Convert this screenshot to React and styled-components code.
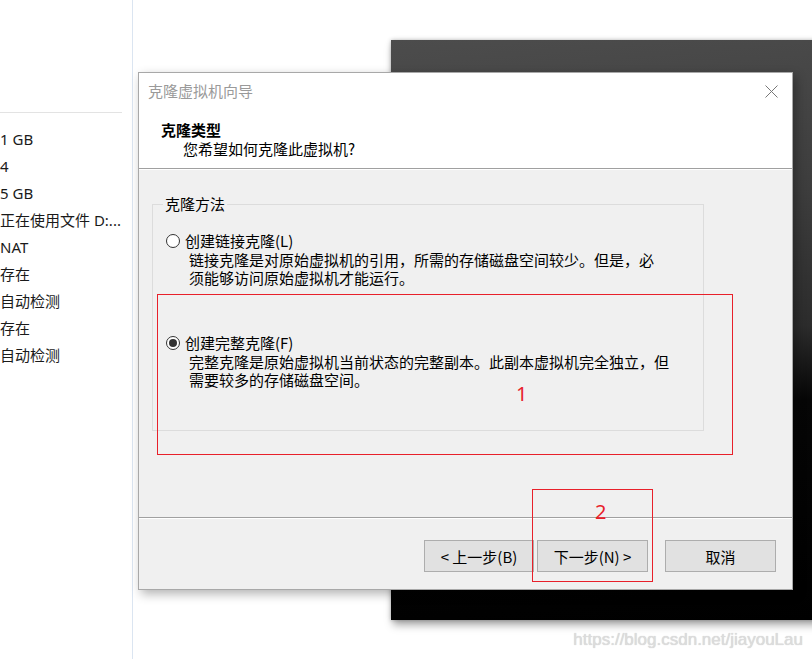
import React from 'react';
import styled, { createGlobalStyle } from 'styled-components';

const GlobalStyle = createGlobalStyle`
  html, body {
    margin: 0;
    padding: 0;
    background: #fff;
  }
  * {
    box-sizing: border-box;
  }
`;

const Desktop = styled.div`
  position: relative;
  width: 812px;
  height: 659px;
  overflow: hidden;
  background: #fff;
  display: flex;
  font-family: "Noto Sans", "Noto Sans CJK SC", sans-serif;
`;

const SidePanel = styled.div`
  width: 133px;
  height: 100%;
  border-right: 1px solid #dbe5f1;
  flex-shrink: 0;
`;

const SideTop = styled.div`
  width: 122px;
  height: 113px;
  border-bottom: 1px solid #e3e3e3;
`;

const SideList = styled.div`
  padding-top: 13px;
  display: flex;
  flex-direction: column;
`;

const SideRow = styled.div`
  height: 27px;
  line-height: 27px;
  font-size: 15px;
  color: #1a1a1a;
  white-space: nowrap;
`;

const DarkWindow = styled.div`
  position: absolute;
  left: 391px;
  top: 40px;
  width: 440px;
  height: 580px;
  background: linear-gradient(175deg, #4c4c4c 0%, #3d3d3d 30%, #2c2c2c 52%, #060606 64%, #000 100%);
  box-shadow: 0 0 4px rgba(0, 0, 0, 0.25), 2px 5px 8px rgba(0, 0, 0, 0.35);
`;

const Dialog = styled.div`
  position: absolute;
  left: 138px;
  top: 72px;
  width: 655px;
  height: 518px;
  border: 1px solid #a8a8a8;
  background: #f0f0f0;
  display: flex;
  flex-direction: column;
  font-family: "Noto Sans CJK SC", sans-serif;
  font-size: 15px;
  color: #000;
  box-shadow: 3px 4px 10px rgba(0, 0, 0, 0.3);
`;

const Header = styled.div`
  background: #fff;
  height: 96px;
  padding: 8px 14px 0 9px;
  border-bottom: 1px solid #a0a0a0;
  box-shadow: 0 1px 0 #fff;
`;

const TitleRow = styled.div`
  display: flex;
  justify-content: space-between;
  align-items: center;
  height: 20px;
  line-height: 20px;
  color: #9a9a9a;
`;

const CloseIcon = styled.svg`
  width: 13px;
  height: 13px;
  display: block;
`;

const HeaderTitle = styled.div`
  margin: 19px 0 0 13px;
  font-weight: bold;
  line-height: 19px;
`;

const HeaderSub = styled.div`
  margin-left: 35px;
  line-height: 19px;
`;

const Body = styled.div`
  flex: 1;
  padding: 25px 88px 0 13px;
`;

const GroupBox = styled.fieldset`
  margin: 0;
  padding: 17px 0 41px 13px;
  border: 1px solid #dcdcdc;
  min-width: 0;
`;

const Legend = styled.legend`
  margin-left: -3px;
  padding: 0 2px;
  line-height: 20px;
  color: #000;
`;

const Option = styled.div`
  & + & {
    margin-top: 46px;
  }
`;

const OptionLabel = styled.label`
  display: flex;
  align-items: center;
  gap: 5px;
  line-height: 20px;
`;

const Radio = styled.span`
  width: 14px;
  height: 14px;
  border-radius: 50%;
  border: 1px solid #333;
  background: #fff;
  display: flex;
  align-items: center;
  justify-content: center;

  &::after {
    content: '';
    width: 8px;
    height: 8px;
    border-radius: 50%;
    background: ${(p) => (p.$checked ? '#333' : 'transparent')};
  }
`;

const OptionDesc = styled.div`
  padding-left: 23px;
  line-height: 18px;
`;

const Footer = styled.div`
  height: 72px;
  border-top: 1px solid #a0a0a0;
  box-shadow: inset 0 1px 0 #fff;
  display: flex;
  justify-content: flex-end;
  align-items: flex-start;
  padding: 22px 16px 0 0;
`;

const Button = styled.button`
  width: ${(p) => p.$width || 111}px;
  height: 32px;
  margin-left: ${(p) => p.$gap || 0}px;
  background: #e1e1e1;
  border: 1px solid #adadad;
  font-family: "Noto Sans CJK SC", sans-serif;
  font-size: 15px;
  color: #000;
  padding: 0;
  cursor: pointer;
`;

const Mark = styled.div`
  position: absolute;
  left: ${(p) => p.$x}px;
  top: ${(p) => p.$y}px;
  width: ${(p) => p.$w}px;
  height: ${(p) => p.$h}px;
  border: 1px solid #e8202a;
  pointer-events: none;
`;

const MarkNumber = styled.span`
  position: absolute;
  left: ${(p) => p.$x}px;
  top: ${(p) => p.$y}px;
  font-family: "Noto Sans", sans-serif;
  font-size: 20px;
  line-height: 16px;
  color: #e8202a;
`;

const Watermark = styled.div`
  position: absolute;
  right: 9px;
  top: 630px;
  font-family: "Liberation Sans", Arial, sans-serif;
  font-size: 17px;
  line-height: 20px;
  color: #dcdcdc;
  text-shadow: 0 0 1px #c8c8c8;
`;

const sideRows = ['1 GB', '4', '5 GB', '正在使用文件 D:...', 'NAT', '存在', '自动检测', '存在', '自动检测'];

const options = [
  {
    label: '创建链接克隆(L)',
    lines: ['链接克隆是对原始虚拟机的引用，所需的存储磁盘空间较少。但是，必', '须能够访问原始虚拟机才能运行。'],
    checked: false,
  },
  {
    label: '创建完整克隆(F)',
    lines: ['完整克隆是原始虚拟机当前状态的完整副本。此副本虚拟机完全独立，但', '需要较多的存储磁盘空间。'],
    checked: true,
  },
];

export default function App() {
  return (
    <>
      <GlobalStyle />
      <Desktop>
        <SidePanel>
          <SideTop />
          <SideList>
            {sideRows.map((r, i) => (
              <SideRow key={i}>{r}</SideRow>
            ))}
          </SideList>
        </SidePanel>

        <DarkWindow />

        <Dialog>
          <Header>
            <TitleRow>
              <span>克隆虚拟机向导</span>
              <CloseIcon viewBox="0 0 13 13">
                <path d="M0.5 0.5 L12.5 12.5 M12.5 0.5 L0.5 12.5" stroke="#777" strokeWidth="1" fill="none" />
              </CloseIcon>
            </TitleRow>
            <HeaderTitle>克隆类型</HeaderTitle>
            <HeaderSub>您希望如何克隆此虚拟机?</HeaderSub>
          </Header>

          <Body>
            <GroupBox>
              <Legend>克隆方法</Legend>
              {options.map((o) => (
                <Option key={o.label}>
                  <OptionLabel>
                    <Radio $checked={o.checked} />
                    {o.label}
                  </OptionLabel>
                  {o.lines.map((l) => (
                    <OptionDesc key={l}>{l}</OptionDesc>
                  ))}
                </Option>
              ))}
            </GroupBox>
          </Body>

          <Footer>
            <Button $width={110}>&lt; 上一步(B)</Button>
            <Button $gap={3}>下一步(N) &gt;</Button>
            <Button $gap={17}>取消</Button>
          </Footer>
        </Dialog>

        <Mark $x={157} $y={294} $w={576} $h={161}>
          <MarkNumber $x={358} $y={91}>1</MarkNumber>
        </Mark>
        <Mark $x={532} $y={489} $w={121} $h={93}>
          <MarkNumber $x={62} $y={14}>2</MarkNumber>
        </Mark>

        <Watermark>https://blog.csdn.net/jiayouLau</Watermark>
      </Desktop>
    </>
  );
}
